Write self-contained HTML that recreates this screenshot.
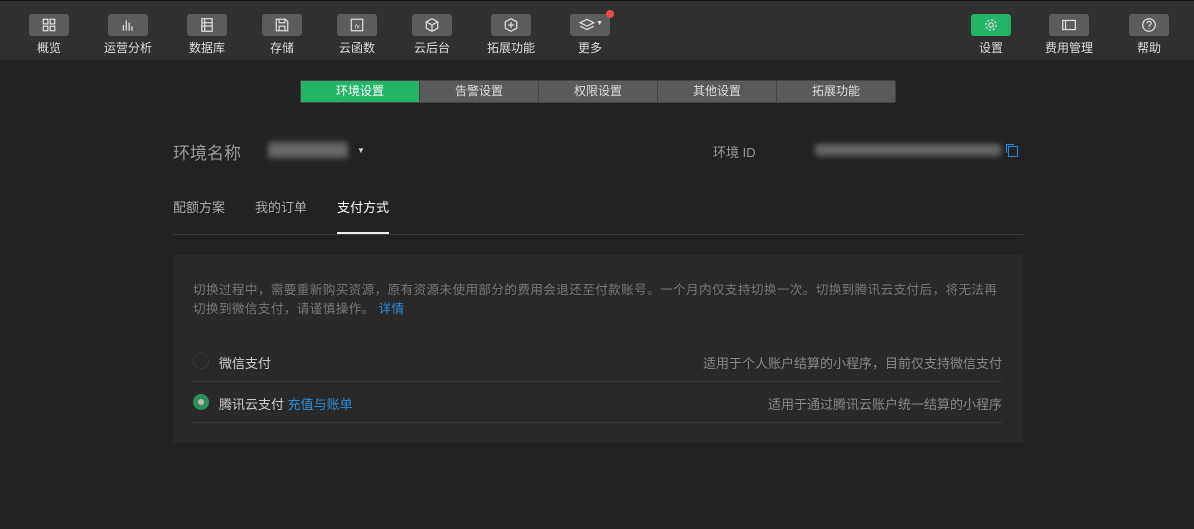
<!DOCTYPE html>
<html><head><meta charset="utf-8"><style>
*{margin:0;padding:0;box-sizing:border-box}
body{width:1194px;height:529px;background:#222;font-family:"Liberation Sans","Noto Sans CJK SC",sans-serif;color:#ccc;position:relative;overflow:hidden}
.top{position:absolute;left:0;top:0;width:1194px;height:60px;background:#303030;border-top:1px solid #111}
.btn{position:absolute;top:13px;width:40px;height:22px;background:#5c5c5c;border-radius:3px;display:flex;align-items:center;justify-content:center}
.btn svg{width:16px;height:16px;stroke:#ddd;fill:none;stroke-width:1.1}
.lab{position:absolute;top:38px;font-size:12px;color:#ddd;width:80px;text-align:center}
.seg{position:absolute;left:300px;top:80px;width:596px;height:23px;background:#5a5a5a;border:1px solid #444;border-radius:2px;display:flex}
.seg div{flex:1;text-align:center;font-size:12px;line-height:21px;color:#ddd;border-right:1px solid #444}
.seg div:last-child{border:none}
.seg .on{background:#22b565;color:#fff}
.t{position:absolute;white-space:nowrap}
.blur{position:absolute;background:#666;filter:blur(3px);border-radius:3px}
.card{position:absolute;left:173px;top:255px;width:850px;height:188px;background:#292929}
.hr{position:absolute;height:1px;background:#3c3c3c}
</style></head><body>
<div class="top">
<div class="btn" style="left:29px"><svg viewBox="0 0 14 14"><rect x="2" y="2" width="4" height="4"/><rect x="8" y="2" width="4" height="4"/><rect x="2" y="8" width="4" height="4"/><rect x="8" y="8" width="4" height="4"/></svg></div><div class="lab" style="left:9px">概览</div>
<div class="btn" style="left:108px"><svg viewBox="0 0 14 14"><path d="M3 12V7M5.5 12V3M8 12V5M10.5 12V8"/></svg></div><div class="lab" style="left:88px">运营分析</div>
<div class="btn" style="left:187px"><svg viewBox="0 0 14 14"><rect x="2.5" y="1.5" width="9" height="11"/><path d="M2.5 5h9M2.5 8h9M5 1.5v11"/></svg></div><div class="lab" style="left:167px">数据库</div>
<div class="btn" style="left:262px"><svg viewBox="0 0 14 14"><path d="M2 2h8l2 2v8H2z M4.5 2v3h5V2 M4.5 12V8h5v4"/></svg></div><div class="lab" style="left:242px">存储</div>
<div class="btn" style="left:337px"><svg viewBox="0 0 14 14"><path d="M2 2h10v10H2z"/><text x="5" y="10" font-size="6" fill="#ddd" stroke="none" font-style="italic">fx</text></svg></div><div class="lab" style="left:317px">云函数</div>
<div class="btn" style="left:412px"><svg viewBox="0 0 14 14"><path d="M7 1.5l5 2.7v5.6L7 12.5 2 9.8V4.2z M2 4.2l5 2.7 5-2.7 M7 6.9v5.6"/></svg></div><div class="lab" style="left:392px">云后台</div>
<div class="btn" style="left:491px"><svg viewBox="0 0 14 14"><path d="M7 1.5l5 2.7v5.6L7 12.5 2 9.8V4.2z M7 4.5v5M4.5 7h5"/></svg></div><div class="lab" style="left:471px">拓展功能</div>
<div class="btn" style="left:570px"><svg viewBox="0 0 14 14" style="margin-left:-6px"><path d="M1 5l6-3 6 3-6 3z M1 8l6 3 6-3"/></svg><span style="position:absolute;right:7px;top:6px;font-size:7px;color:#ddd">▼</span></div><div class="lab" style="left:550px">更多</div>
<div style="position:absolute;left:606px;top:9px;width:8px;height:8px;border-radius:50%;background:#f04848"></div>
<div class="btn" style="left:971px;background:#22b565"><svg viewBox="0 0 14 14"><circle cx="7" cy="7" r="2"/><circle cx="7" cy="7" r="4.5" stroke-dasharray="2 1.5"/></svg></div><div class="lab" style="left:951px">设置</div>
<div class="btn" style="left:1049px"><svg viewBox="0 0 14 14"><rect x="1.5" y="3" width="11" height="8"/><path d="M4 3v8"/></svg></div><div class="lab" style="left:1029px">费用管理</div>
<div class="btn" style="left:1129px"><svg viewBox="0 0 14 14"><circle cx="7" cy="7" r="5.5"/><path d="M5.3 5.5a1.8 1.8 0 1 1 2.3 1.7c-.5.2-.6.5-.6 1.2M7 9.7v.6"/></svg></div><div class="lab" style="left:1109px">帮助</div>
</div>
<div class="seg"><div class="on">环境设置</div><div>告警设置</div><div>权限设置</div><div>其他设置</div><div>拓展功能</div></div>
<div class="t" style="left:173px;top:139px;font-size:17px;color:#999">环境名称</div>
<div class="blur" style="left:268px;top:142px;width:80px;height:16px"></div>
<div class="t" style="left:357px;top:146px;font-size:8px;color:#ccc">▼</div>
<div class="t" style="left:713px;top:142px;font-size:13px;color:#999">环境 ID</div>
<div class="blur" style="left:815px;top:144px;width:186px;height:12px"></div>
<div style="position:absolute;left:1008px;top:146px;width:10px;height:11px;border:1.5px solid #1e88e5"></div>
<div style="position:absolute;left:1006px;top:144px;width:8px;height:9px;border-left:1.5px solid #1e88e5;border-top:1.5px solid #1e88e5"></div>
<div class="t" style="left:173px;top:197px;font-size:13px;color:#aaa">配额方案</div>
<div class="t" style="left:255px;top:197px;font-size:13px;color:#aaa">我的订单</div>
<div class="t" style="left:337px;top:197px;font-size:13px;color:#fff">支付方式</div>
<div class="hr" style="left:173px;top:234px;width:850px;background:#3a3a3a"></div>
<div style="position:absolute;left:337px;top:232px;width:52px;height:2px;background:#eee"></div>
<div class="card"></div>
<div class="t" style="left:193px;top:281px;font-size:12.6px;color:#777;line-height:19px;letter-spacing:0.38px">切换过程中，需要重新购买资源，原有资源未使用部分的费用会退还至付款账号。一个月内仅支持切换一次。切换到腾讯云支付后，将无法再<br>切换到微信支付，请谨慎操作。 <span style="color:#2d8cd8">详情</span></div>
<div style="position:absolute;left:193px;top:353px;width:16px;height:16px;border-radius:50%;border:1px solid #3a3a3a"></div>
<div class="t" style="left:219px;top:353px;font-size:13px;color:#ccc">微信支付</div>
<div class="t" style="right:192px;top:353px;font-size:13px;color:#888">适用于个人账户结算的小程序，目前仅支持微信支付</div>
<div class="hr" style="left:193px;top:381px;width:809px"></div>
<div style="position:absolute;left:193px;top:394px;width:16px;height:16px;border-radius:50%;background:#2f8f5a"></div>
<div style="position:absolute;left:198px;top:399px;width:6px;height:6px;border-radius:50%;background:#bbb"></div>
<div class="t" style="left:219px;top:394px;font-size:13px;color:#ccc">腾讯云支付 <span style="color:#2d8cd8">充值与账单</span></div>
<div class="t" style="right:192px;top:394px;font-size:13px;color:#888">适用于通过腾讯云账户统一结算的小程序</div>
<div class="hr" style="left:193px;top:422px;width:809px"></div>
</body></html>
